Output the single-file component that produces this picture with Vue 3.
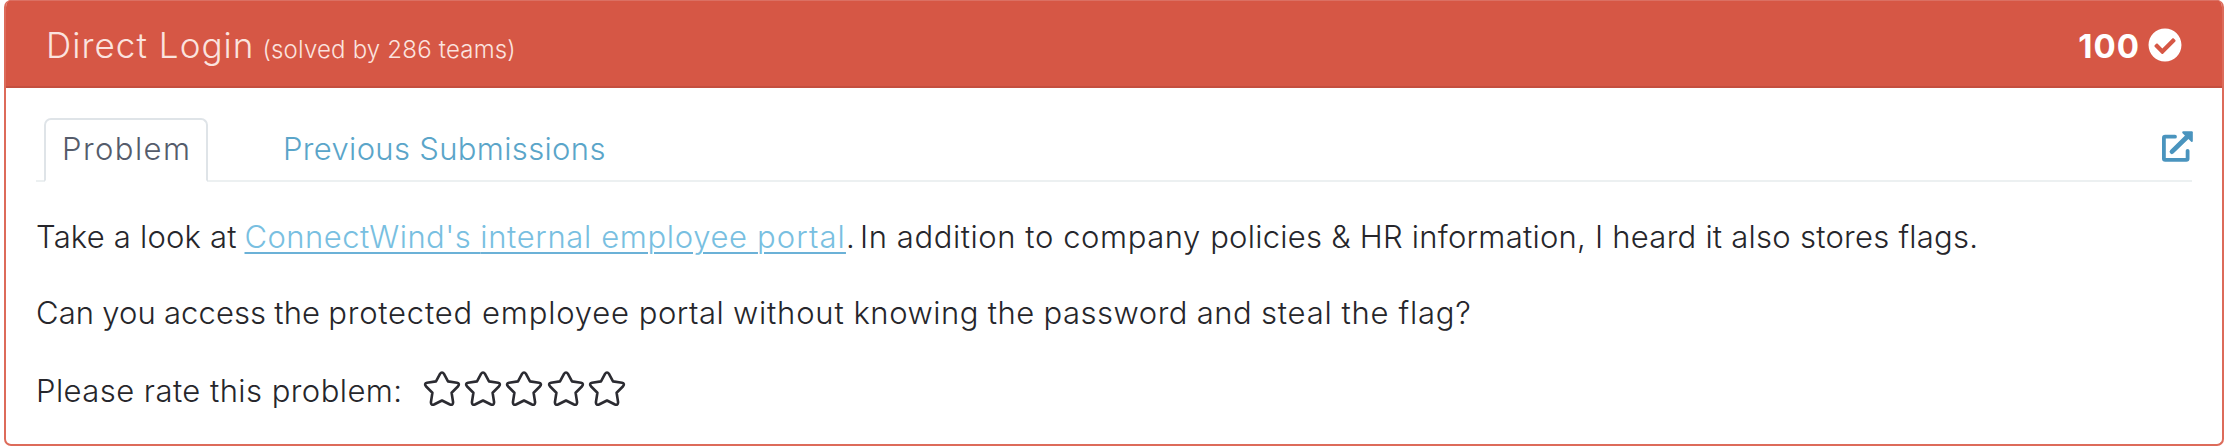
<script setup>
const stars = [1, 2, 3, 4, 5]
</script>

<template>
  <section class="card">
    <header class="card-header">
      <h2 class="title">Direct Login</h2>
      <small class="solved">(solved by 286 teams)</small>
      <span class="points">100</span>
      <svg class="check" viewBox="0 0 512 512" aria-hidden="true">
        <path fill="#fff" d="M504 256c0 136.967-111.033 248-248 248S8 392.967 8 256 119.033 8 256 8s248 111.033 248 248zM227.314 387.314l184-184c6.248-6.248 6.248-16.379 0-22.627l-22.627-22.627c-6.248-6.249-16.379-6.249-22.628 0L216 308.118l-70.059-70.059c-6.248-6.248-16.379-6.248-22.628 0l-22.627 22.627c-6.248 6.248-6.248 16.379 0 22.627l104 104c6.249 6.249 16.379 6.249 22.628.001z" />
      </svg>
    </header>
    <div class="card-body">
      <nav class="tabs">
        <a class="tab active"><span>Problem</span></a>
        <a class="tab previous"><span>Previous Submissions</span></a>
        <svg class="external" viewBox="0 0 31 31" aria-hidden="true">
          <path d="M13 5.7H3.2Q1.9 5.7 1.9 7V27.6Q1.9 28.9 3.2 28.9H24.3Q25.6 28.9 25.6 27.6V19.8" fill="none" stroke="#4a94be" stroke-width="3.8" stroke-linecap="round" />
          <path d="M10 20.6L25 6" stroke="#4a94be" stroke-width="4.8" stroke-linecap="round" />
          <path d="M21.3 0.3H29.8Q30.8 .3 30.8 1.3V9.8Q30.7 11.6 29.2 10.7L20.3 1.9Q19.7 .5 21.3 .3Z" fill="#4a94be" />
        </svg>
      </nav>
      <p class="line intro"><span class="lead">Take a look at </span><a class="link"><span class="snug">ConnectWind's </span>internal employee <span class="wide">portal</span></a><span class="rest"><span class="stop">.</span> <span class="wide">In addition to company </span>policies &amp; HR information, I heard it also stores flags.</span></p>
      <p class="line question"><span class="tight">Can you access the </span><span class="wide">protected employee </span>portal <span class="wide">without </span>knowing the password and <span class="wide">steal the flag?</span></p>
      <div class="line rating">
        <span class="label">Please rate this problem:</span>
        <span class="stars">
          <svg v-for="n in stars" :key="n" class="star" viewBox="0 0 38 36" aria-hidden="true">
            <path d="M16.9 3.1Q19 0 21.1 3.1L25 10.4L34 11.8Q37.2 12.7 35.1 15.3L28.6 21.7L30.1 31.2Q30 34.6 27 33.5L19 29.5L11 33.5Q8 34.6 7.9 31.2L9.4 21.7L2.9 15.3Q.8 12.7 4 11.8L13 10.4Z" />
          </svg>
        </span>
      </div>
    </div>
  </section>
</template>

<style>
body { margin: 0; background: #fff; }
</style>

<style scoped>
.card {
  box-sizing: border-box;
  height: 446px;
  margin: 0 2px 0 4px;
  border: 2px solid #dd6b5a;
  border-top: 0;
  border-radius: 7px;
  overflow: hidden;
  background: #fff;
  color: #26262b;
  font-family: Inter, "Open Sans", sans-serif;
  font-size: 31px;
  font-weight: 300;
}
.card-header {
  box-sizing: border-box;
  display: flex;
  align-items: baseline;
  height: 88px;
  margin: 0 -2px;
  padding: 0 42px;
  background: #d65745;
  border-top: 1px solid #db7063;
  border-bottom: 2px solid #c44f3f;
  color: #fbe3df;
  line-height: 89px;
  white-space: nowrap;
}
.title { margin: 0; font-size: 35px; font-weight: 300; letter-spacing: 1.05px; }
.solved { margin-left: 8px; font-size: 24px; letter-spacing: .2px; }
.points { margin-left: auto; color: #fff; font-size: 33px; font-weight: 700; letter-spacing: 1px; }
.check { align-self: flex-start; width: 34px; height: 34px; margin: 27px 0 0 8px; }
.card-body { padding: 30px 30px 0; }
.tabs {
  box-sizing: border-box;
  display: flex;
  height: 64px;
  border-bottom: 2px solid #ecf0f1;
}
.tab { box-sizing: border-box; height: 64px; line-height: 57px; white-space: nowrap; }
.active {
  width: 164px;
  margin-left: 8px;
  padding-left: 16px;
  border: 2px solid #dfe4e8;
  border-bottom: 2px solid #fff;
  border-radius: 7px 7px 0 0;
  background: #fff;
  color: #555c6b;
  letter-spacing: 1.45px;
}
.previous { padding: 2px 0 0 75px; color: #5aa5c9; letter-spacing: .34px; }
.external { width: 31px; height: 31px; margin: 13px -1px 0 auto; }
.line { margin: 0; white-space: nowrap; }
.intro { display: flex; height: 76px; padding-top: 31px; box-sizing: border-box; line-height: 48px; }
.lead { width: 208.5px; white-space: pre; letter-spacing: .2px; }
.link {
  width: 601.5px;
  color: #79bfe1;
  letter-spacing: .645px;
  text-decoration: underline;
  text-decoration-color: #6bb1d7;
  text-decoration-thickness: 2px;
  text-underline-offset: 4px;
}
.link .snug { letter-spacing: .45px; }
.link .wide { letter-spacing: 1.09px; }
.rest { letter-spacing: .25px; }
.rest .stop { letter-spacing: -3.7px; }
.rest .wide { letter-spacing: .57px; }
.question { height: 76px; padding-top: 31px; box-sizing: border-box; line-height: 48px; letter-spacing: .52px; word-spacing: -.5px; }
.question .tight { letter-spacing: .06px; }
.question .wide { letter-spacing: .8px; }
.rating { display: flex; padding-top: 33px; line-height: 48px; letter-spacing: .45px; }
.label { width: 386.5px; }
.stars { display: flex; gap: 3.4px; padding-top: 4px; }
.star { width: 38px; height: 36px; }
.star path { fill: none; stroke: #2b2b31; stroke-width: 2.6; stroke-linejoin: round; }
</style>
